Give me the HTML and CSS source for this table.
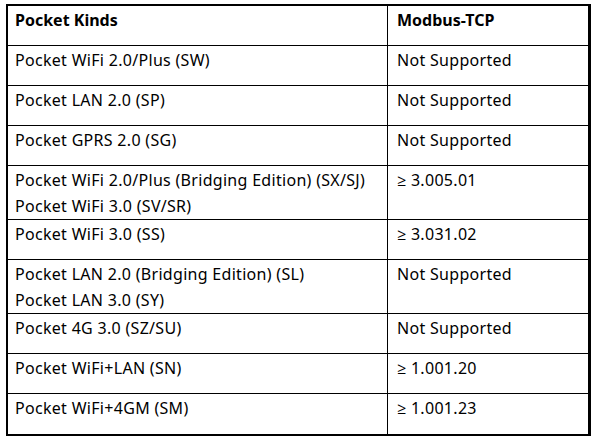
FILE: index.html
```html
<!DOCTYPE html>
<html>
<head>
<meta charset="utf-8">
<link rel="stylesheet" href="styles.css">
</head>
<body>
<table class="kinds">
  <colgroup><col class="c1"><col class="c2"></colgroup>
  <thead>
    <tr class="r1"><th>Pocket Kinds</th><th>Modbus-TCP</th></tr>
  </thead>
  <tbody>
    <tr class="r1"><td>Pocket WiFi 2.0/Plus (SW)</td><td>Not Supported</td></tr>
    <tr class="r1"><td>Pocket LAN 2.0 (SP)</td><td>Not Supported</td></tr>
    <tr class="r1"><td>Pocket GPRS 2.0 (SG)</td><td>Not Supported</td></tr>
    <tr class="r2"><td>Pocket WiFi 2.0/Plus (Bridging Edition) (SX/SJ)<br>Pocket WiFi 3.0 (SV/SR)</td><td>≥ 3.005.01</td></tr>
    <tr class="r1"><td>Pocket WiFi 3.0 (SS)</td><td>≥ 3.031.02</td></tr>
    <tr class="r2"><td>Pocket LAN 2.0 (Bridging Edition) (SL)<br>Pocket LAN 3.0 (SY)</td><td>Not Supported</td></tr>
    <tr class="r1"><td>Pocket 4G 3.0 (SZ/SU)</td><td>Not Supported</td></tr>
    <tr class="r1"><td>Pocket WiFi+LAN (SN)</td><td>≥ 1.001.20</td></tr>
    <tr class="r1 last"><td>Pocket WiFi+4GM (SM)</td><td>≥ 1.001.23</td></tr>
  </tbody>
</table>
</body>
</html>
```
FILE: styles.css
```css
html, body {
  margin: 0;
  padding: 0;
  background: #ffffff;
}
body {
  padding: 4px 0 0 6px;
  font-family: "Noto Sans", "Open Sans", sans-serif;
  font-size: 16px;
  letter-spacing: 0.3px;
  color: #000;
}
.kinds {
  border-collapse: separate;
  border-spacing: 0;
  table-layout: fixed;
  width: 585px;
  border-style: solid;
  border-color: #000;
  border-width: 2px 3px 2px 2px;
}
.c1 { width: 380px; }
.c2 { width: 200px; }
.kinds th,
.kinds td {
  text-align: left;
  vertical-align: top;
  padding: 1px 8px 0 8px;
  line-height: 26px;
  border-bottom: 1px solid #000;
  white-space: nowrap;
}
.kinds th {
  font-weight: bold;
  letter-spacing: 0;
}
.kinds th:first-child,
.kinds td:first-child { border-right: 1px solid #000; }
.kinds td:first-child,
.kinds th:first-child { padding-left: 7px; }
.kinds td:last-child,
.kinds th:last-child { padding-left: 9px; }
.r1 { height: 40px; }
.r2 { height: 52px; }
.last td { border-bottom: none; }
```
